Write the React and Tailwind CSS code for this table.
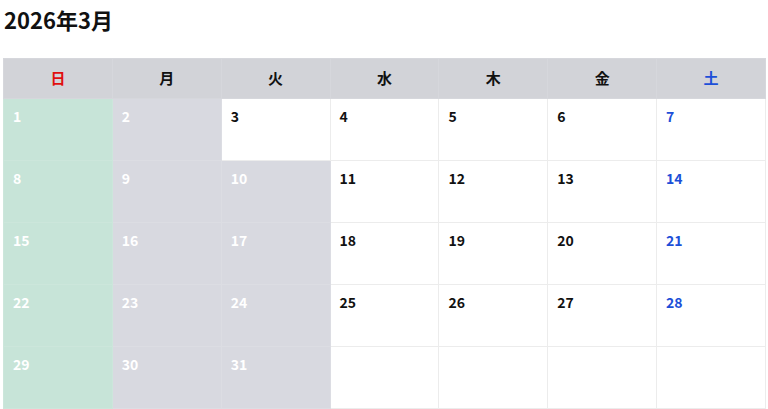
export default function App() {
  const weeks = [
    [1, 2, 3, 4, 5, 6, 7],
    [8, 9, 10, 11, 12, 13, 14],
    [15, 16, 17, 18, 19, 20, 21],
    [22, 23, 24, 25, 26, 27, 28],
    [29, 30, 31, null, null, null, null],
  ];
  const heads = ["日", "月", "火", "水", "木", "金", "土"];
  const isPastDay = (d) =>
    d !== null && (d < 3 || (d >= 8 && d <= 10) || (d >= 15 && d <= 17) || (d >= 22 && d <= 24) || d >= 29);
  return (
    <div className="px-[3px] pt-[4px] bg-white" style={{ fontFamily: '"Noto Sans CJK JP", "Noto Sans", sans-serif' }}>
      <h1 className="text-[22px] font-bold leading-[30px] text-[#111] pl-[1px] mb-[24px]">2026年3月</h1>
      <table className="w-[763px] table-fixed border-collapse">
        <thead>
          <tr className="h-[40px] bg-[#d2d3d8]">
            {heads.map((h, i) => (
              <th
                key={h}
                className={
                  "border border-[#d6d7dc] text-[15px] font-bold " +
                  (i === 0 ? "text-[#e00f0f]" : i === 6 ? "text-[#1c4fd8]" : "text-[#111]")
                }
              >
                {h}
              </th>
            ))}
          </tr>
        </thead>
        <tbody>
          {weeks.map((w, wi) => (
            <tr key={wi} className="h-[62px]">
              {w.map((d, i) => {
                const past = isPastDay(d);
                let cls = "bg-white text-[#111] border-[#ececec]";
                if (past) {
                  cls =
                    i === 0
                      ? "bg-[#c7e4d8] text-white border-[#cce6db]"
                      : "bg-[#d8d9e0] text-white border-[#dcdde3]";
                } else if (i === 6) {
                  cls = "bg-white text-[#1c4fd8] border-[#ececec]";
                }
                return (
                  <td
                    key={i}
                    className={"border align-top pl-[9px] pt-[7px] text-[14px] font-bold leading-[20px] " + cls}
                  >
                    {d ?? ""}
                  </td>
                );
              })}
            </tr>
          ))}
        </tbody>
      </table>
    </div>
  );
}
